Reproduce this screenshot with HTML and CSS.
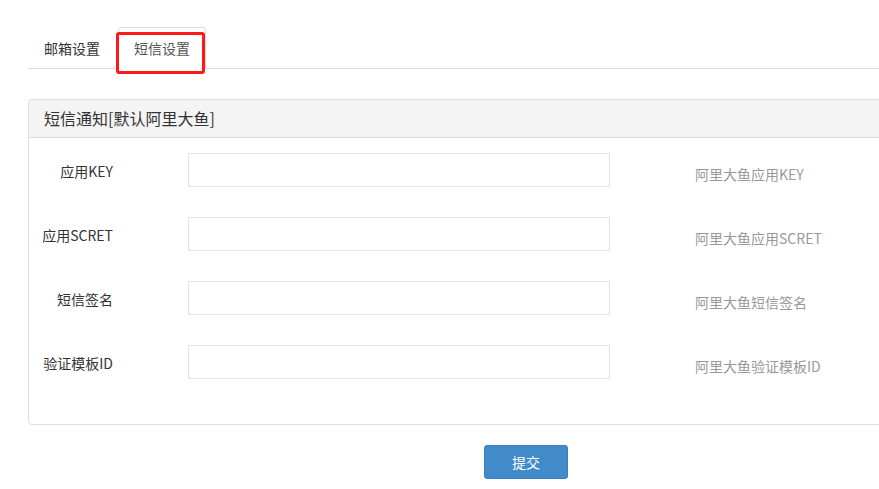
FILE: index.html
```html
<!DOCTYPE html>
<html lang="zh-CN">
<head>
    <meta charset="UTF-8">
    <meta name="viewport" content="width=device-width, initial-scale=1.0">
    <title>短信设置</title>
    <link rel="stylesheet" href="styles.css">
</head>
<body>
    <div class="page">
        <ul class="nav-tabs">
            <li class="tab"><a href="#">邮箱设置</a></li>
            <li class="tab active"><a href="#">短信设置</a><span class="mark"></span></li>
        </ul>
        <div class="panel">
            <div class="panel-heading">短信通知[默认阿里大鱼]</div>
            <form class="panel-body">
                <div class="form-row">
                    <label for="appKey">应用KEY</label>
                    <input type="text" id="appKey">
                    <span class="help">阿里大鱼应用KEY</span>
                </div>
                <div class="form-row">
                    <label for="appSecret">应用SCRET</label>
                    <input type="text" id="appSecret">
                    <span class="help">阿里大鱼应用SCRET</span>
                </div>
                <div class="form-row">
                    <label for="signName">短信签名</label>
                    <input type="text" id="signName">
                    <span class="help">阿里大鱼短信签名</span>
                </div>
                <div class="form-row">
                    <label for="templateId">验证模板ID</label>
                    <input type="text" id="templateId">
                    <span class="help">阿里大鱼验证模板ID</span>
                </div>
            </form>
        </div>
        <div class="actions">
            <button type="submit">提交</button>
        </div>
    </div>
</body>
</html>
```
FILE: styles.css
```css
body {
    font-family: "Noto Sans CJK SC", "Noto Sans", sans-serif;
    font-size: 14px;
    color: #333;
    background-color: #fff;
    margin: 0;
    overflow: hidden;
}
.page {
    padding: 27px 0 0 28px;
}
.nav-tabs {
    list-style: none;
    margin: 0 -10px 0 0;
    padding: 0;
    display: flex;
    border-bottom: 1px solid #ddd;
}
.tab {
    position: relative;
    margin-right: 2px;
    margin-bottom: -1px;
}
.tab a {
    display: block;
    padding: 0 15px;
    height: 40px;
    line-height: 40px;
    color: #333;
    text-decoration: none;
    border: 1px solid transparent;
    border-bottom: none;
    border-radius: 4px 4px 0 0;
}
.tab.active a {
    color: #555;
    background: #fff;
    border-color: #ddd;
    height: 41px;
}
.mark {
    position: absolute;
    left: -2px;
    top: 5px;
    width: 83px;
    height: 36px;
    border: 3px solid #ff1a1a;
    border-radius: 3px;
}
.panel {
    margin: 30px -10px 0 0;
    border: 1px solid #ddd;
    border-radius: 4px;
    background: #fff;
}
.panel-heading {
    height: 37px;
    line-height: 37px;
    padding: 0 15px;
    font-size: 16px;
    background-color: #f4f4f4;
    border-bottom: 1px solid #ddd;
    border-radius: 3px 3px 0 0;
}
.panel-body {
    padding: 15px 0;
    margin: 0;
}
.form-row {
    display: grid;
    grid-template-columns: 84px 422px 1fr;
    align-items: center;
    margin-bottom: 30px;
}
.form-row label {
    text-align: right;
    line-height: 20px;
    margin-top: 2px;
}
.form-row input {
    grid-column: 2;
    margin-left: 75px;
    width: 422px;
    height: 34px;
    box-sizing: border-box;
    border: 1px solid #e3e3e3;
    padding: 6px 12px;
    font: inherit;
}
.help {
    margin-left: 160px;
    margin-top: 7px;
    color: #999;
    line-height: 20px;
    white-space: nowrap;
}
.actions {
    margin-top: 20px;
    padding-left: 456px;
}
button {
    width: 84px;
    height: 34px;
    font: inherit;
    color: #fff;
    background-color: #428bca;
    border: 1px solid #3a7fbd;
    border-radius: 3px;
    cursor: pointer;
}
```
